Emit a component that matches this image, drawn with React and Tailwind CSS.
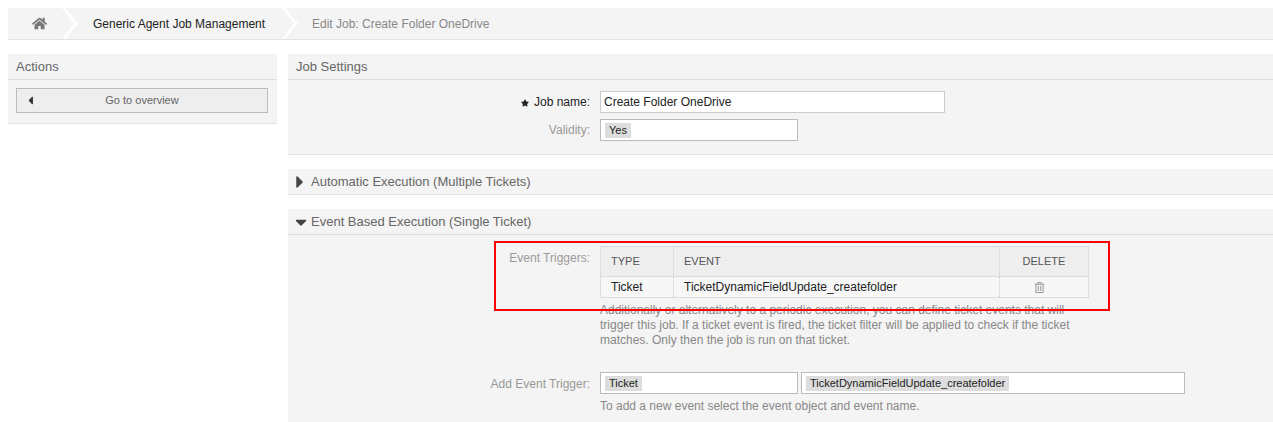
import { FaHome, FaCaretLeft, FaCaretRight, FaCaretDown, FaStar, FaRegTrashAlt } from 'react-icons/fa';

function Chevron() {
  return (
    <svg width="16" height="31" viewBox="0 0 16 31" className="shrink-0">
      <path d="M0 0 L3 0 L16 15.5 L3 31 L0 31 L12 15.5 Z" fill="#ffffff" />
    </svg>
  );
}

function Chip({ children }) {
  return <span className="bg-[#dddddd] text-[11px] text-[#222222] px-[4px] h-[15px] leading-[15px] inline-block">{children}</span>;
}

function Field({ label, className = '', labelClass = 'text-[#999999]', children }) {
  return (
    <div className={`flex ${className}`}>
      <div className={`w-[312px] shrink-0 text-right pr-[10px] ${labelClass}`}>{label}</div>
      <div className="min-w-0">{children}</div>
    </div>
  );
}

export default function App() {
  return (
    <div className="relative h-[422px] w-[1273px] overflow-hidden bg-white pt-2 pl-2 text-xs text-[#666666] font-['Liberation_Sans',Arial,sans-serif]">
      <div className="flex h-[32px] items-center bg-[#f4f4f4] border-b border-[#e4e4e4]">
        <div className="flex w-[54px] justify-center pl-[9px] text-[#777777]"><FaHome size={15} /></div>
        <Chevron />
        <div className="w-[204px] pl-[15px] text-[#222222]">Generic Agent Job Management</div>
        <Chevron />
        <div className="pl-[14px] text-[#888888]">Edit Job: Create Folder OneDrive</div>
      </div>

      <div className="mt-[14px] flex gap-[11px]">
        <aside className="w-[269px] shrink-0 self-start bg-[#f4f4f4] border-b border-[#e4e4e4]">
          <h2 className="h-[26px] border-b border-[#dddddd] pl-2 text-[13px] leading-[25px] text-[#666666]">Actions</h2>
          <div className="pl-2 pr-[9px] pt-[8px] pb-[10px]">
            <button className="relative flex h-[25px] w-full items-center justify-center border border-[#bbbbbb] bg-[#eeeeee] pb-[1px] text-[11px] text-[#666666]">
              <FaCaretLeft size={13} className="absolute left-[7px] top-[5px] text-[#333333]" />
              Go to overview
            </button>
          </div>
        </aside>

        <main className="min-w-0 flex-1">
          <section className="h-[101px] bg-[#f4f4f4] border-b border-[#e4e4e4]">
            <h2 className="h-[26px] border-b border-[#dddddd] pl-2 text-[13px] leading-[25px]">Job Settings</h2>
            <Field
              className="mt-[11px] items-center"
              labelClass="text-[#222222]"
              label={<span className="inline-flex items-center gap-[5px]"><FaStar size={8} className="mt-[2px]" />Job name:</span>}
            >
              <div className="h-[22px] w-[345px] border border-[#cccccc] bg-white pl-[3px] leading-[20px] text-[#222222]">Create Folder OneDrive</div>
            </Field>
            <Field className="mt-[6px] items-center" label="Validity:">
              <div className="flex h-[22px] w-[198px] items-center border border-[#bbbbbb] bg-white pl-[4px]"><Chip>Yes</Chip></div>
            </Field>
          </section>

          <section className="mt-[14px] h-[26px] bg-[#f4f4f4] border-b border-[#e4e4e4]">
            <h2 className="flex h-[25px] items-center pl-2 text-[13px]"><FaCaretRight size={20} className="ml-[-6px] mr-[1px] shrink-0 text-[#444444]" />Automatic Execution (Multiple Tickets)</h2>
          </section>

          <section className="mt-[14px] h-[213px] bg-[#f4f4f4]">
            <h2 className="flex h-[26px] items-center border-b border-[#dddddd] pl-2 text-[13px]"><FaCaretDown size={18} className="ml-[-4px] mr-[1px] shrink-0 text-[#444444]" />Event Based Execution (Single Ticket)</h2>

            <Field className="mt-[11px]" label={<span className="block pt-[1px] leading-[22px]">Event Triggers:</span>}>
              <table className="w-[489px] table-fixed border-collapse border border-[#dddddd] text-left">
                <colgroup>
                  <col className="w-[73px]" />
                  <col className="w-[326px]" />
                  <col />
                </colgroup>
                <thead>
                  <tr className="h-[30px] bg-[#eeeeee] text-[11px] text-[#555555]">
                    <th className="border border-[#dddddd] pl-[10px] font-normal">TYPE</th>
                    <th className="border border-[#dddddd] pl-[10px] font-normal">EVENT</th>
                    <th className="border border-[#dddddd] text-center font-normal">DELETE</th>
                  </tr>
                </thead>
                <tbody>
                  <tr className="h-[21px] bg-[#f7f7f7] text-[#222222]">
                    <td className="border-r border-dotted border-[#cccccc] pl-[10px]">Ticket</td>
                    <td className="border-r border-dotted border-[#cccccc] pl-[10px]">TicketDynamicFieldUpdate_createfolder</td>
                    <td className="pr-[10px]"><FaRegTrashAlt size={11} className="mx-auto text-[#999999]" /></td>
                  </tr>
                </tbody>
              </table>
              <p className="mt-[5px] w-[489px] leading-[15px] text-[#888888]">
                Additionally or alternatively to a periodic execution, you can define ticket events that will trigger this job. If a ticket event is fired, the ticket filter will be applied to check if the ticket matches. Only then the job is run on that ticket.
              </p>
            </Field>

            <Field className="mt-[24px] items-center" label={<span className="block pt-[1px]">Add Event Trigger:</span>}>
              <div className="flex gap-[3px]">
                <div className="flex h-[22px] w-[198px] items-center border border-[#bbbbbb] bg-white pl-[4px]"><Chip>Ticket</Chip></div>
                <div className="flex h-[22px] w-[384px] items-center border border-[#bbbbbb] bg-white pl-[4px]"><Chip>TicketDynamicFieldUpdate_createfolder</Chip></div>
              </div>
            </Field>
            <Field className="mt-[5px]" label="">
              <p className="leading-[15px] text-[#888888]">To add a new event select the event object and event name.</p>
            </Field>
          </section>
        </main>
      </div>

      <div className="absolute left-[494px] top-[241px] h-[70px] w-[616px] border-2 border-[#ff0000]" />
    </div>
  );
}
